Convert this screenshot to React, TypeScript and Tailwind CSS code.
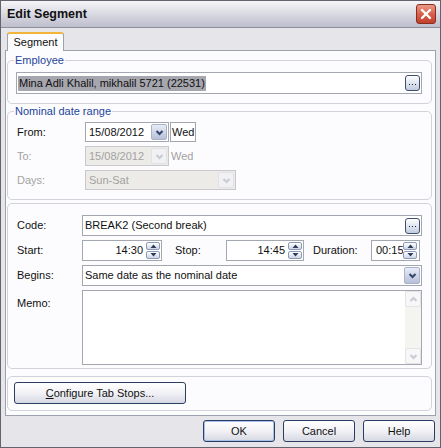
import React from "react";

function Chevron({ color, up }: { color: string; up?: boolean }) {
  return (
    <svg width="9" height="7" viewBox="0 0 9 7">
      <path
        d={up ? "M1.5 5 L4.5 2 L7.5 5" : "M1.5 2 L4.5 5 L7.5 2"}
        stroke={color}
        strokeWidth="2"
        fill="none"
      />
    </svg>
  );
}

function DropBtn({ disabled }: { disabled?: boolean }) {
  return (
    <div
      className={
        disabled
          ? "w-[16px] h-full border border-[#e2e2e6] rounded-[2px] bg-[#f1f1f3] flex items-center justify-center"
          : "w-[16px] h-full border border-[#a9b3cb] rounded-[2px] bg-gradient-to-b from-[#e8ecf7] to-[#b7c0d8] flex items-center justify-center"
      }
    >
      <Chevron color={disabled ? "#c6cad2" : "#34466a"} />
    </div>
  );
}

function Ellipsis() {
  return (
    <div className="w-[15px] h-[16px] border border-[#3e4f6f] rounded-[3px] bg-gradient-to-b from-white to-[#c2cce0] flex items-center justify-center gap-[2px] pt-[2px]">
      <div className="w-[1px] h-[1px] bg-[#1a2640]" />
      <div className="w-[1px] h-[1px] bg-[#1a2640]" />
      <div className="w-[1px] h-[1px] bg-[#1a2640]" />
    </div>
  );
}

function Spin() {
  return (
    <div className="flex flex-col justify-center gap-[1px] w-[14px] shrink-0">
      <div className="h-[8px] border border-[#8d9ab4] rounded-[2px] bg-gradient-to-b from-white to-[#cdd5e6] flex items-center justify-center">
        <svg width="7" height="4" viewBox="0 0 7 4">
          <path d="M0.5 4 L3.5 0.5 L6.5 4 Z" fill="#2c3b58" />
        </svg>
      </div>
      <div className="h-[8px] border border-[#8d9ab4] rounded-[2px] bg-gradient-to-b from-white to-[#cdd5e6] flex items-center justify-center">
        <svg width="7" height="4" viewBox="0 0 7 4">
          <path d="M0.5 0 L3.5 3.5 L6.5 0 Z" fill="#2c3b58" />
        </svg>
      </div>
    </div>
  );
}

function XpButton({ children, def }: { children: React.ReactNode; def?: boolean }) {
  return (
    <div
      className={
        def
          ? "w-[72px] h-[22px] border border-[#2a3d62] rounded-[3px] bg-gradient-to-b from-white via-[#f2f2f6] to-[#d6d8e2] shadow-[inset_0_0_0_1px_#a9c1ea] flex items-center justify-center"
          : "w-[72px] h-[22px] border border-[#2a3d62] rounded-[3px] bg-gradient-to-b from-white via-[#f2f2f6] to-[#d6d8e2] flex items-center justify-center"
      }
    >
      {children}
    </div>
  );
}

export default function App() {
  return (
    <div className="w-[441px] h-[448px] flex flex-col bg-[#e6e6ea] border border-[#62636c] text-[11px] leading-[13px] text-[#111] font-['Liberation_Sans',Arial,sans-serif] overflow-hidden">
      {/* Title bar */}
      <div className="h-[27px] shrink-0 flex items-center justify-between pl-[6px] pr-[4px] bg-gradient-to-b from-[#f6f6f9] via-[#d9d9e2] to-[#bebecd] border-b border-[#8e8e9c]">
        <span className="font-bold text-[12.5px] text-[#111]">Edit Segment</span>
        <div className="w-[20px] h-[20px] rounded-[3px] border border-[#8a2c20] bg-gradient-to-b from-[#e99a88] via-[#d8604a] to-[#c0402c] flex items-center justify-center">
          <svg width="12" height="12" viewBox="0 0 12 12">
            <path d="M2 2 L10 10 M10 2 L2 10" stroke="white" strokeWidth="2.4" strokeLinecap="round" />
          </svg>
        </div>
      </div>

      <div className="flex-1 flex flex-col px-[4px]">
        {/* Tab row */}
        <div className="h-[22px] shrink-0 flex items-end pl-[2px]">
          <div className="relative z-10 -mb-[1px] w-[57px] h-[19px] bg-[#fcfcfe] border-l border-r border-[#9ca3ae] border-t-2 border-t-[#f3b43a] rounded-t-[3px] flex items-center justify-center">
            Segment
          </div>
        </div>

        {/* Panel */}
        <div className="h-[366px] shrink-0 border border-[#9ca3ae] bg-[#fcfcfe] flex flex-col pl-[1px] pr-[3px]">
          {/* Employee */}
          <fieldset className="mt-[3px] border border-[#d2d2da] rounded-[5px] pl-[8px] pr-[9px] pb-[9px]">
            <legend className="-ml-[2px] px-[1px] text-[#23449a] leading-[13px]">Employee</legend>
            <div className="mt-[5px] h-[22px] border border-[#a3a7b0] bg-white flex items-center justify-between pl-[1px] pr-[1px]">
              <span className="bg-[#a6a6ae] px-[1px] leading-[15px]">Mina Adli Khalil, mikhalil 5721 (22531)</span>
              <Ellipsis />
            </div>
          </fieldset>

          {/* Nominal date range */}
          <fieldset className="mt-[1px] border border-[#d2d2da] rounded-[5px] pl-[9px] pr-[9px] pb-[9px]">
            <legend className="-ml-[3px] px-[1px] text-[#23449a] leading-[13px]">Nominal date range</legend>
            <div className="mt-[4px] h-[20px] flex items-center">
              <div className="w-[68px]">From:</div>
              <div className="w-[84px] h-full border border-[#a3a7b0] bg-white flex items-center justify-between pl-[3px] pr-[1px] py-[1px]">
                <span>15/08/2012</span>
                <DropBtn />
              </div>
              <div className="ml-[1px] w-[26px] h-full border border-[#a3a7b0] bg-white flex items-center pl-[1px]">Wed</div>
            </div>
            <div className="mt-[4px] h-[20px] flex items-center text-[#a2a2a2]">
              <div className="w-[68px]">To:</div>
              <div className="w-[84px] h-full border border-[#c9c9cc] bg-[#ecebe7] flex items-center justify-between pl-[3px] pr-[1px] py-[1px]">
                <span>15/08/2012</span>
                <DropBtn disabled />
              </div>
              <div className="ml-[2px]">Wed</div>
            </div>
            <div className="mt-[4px] h-[20px] flex items-center text-[#a2a2a2]">
              <div className="w-[68px]">Days:</div>
              <div className="w-[151px] h-full border border-[#c9c9cc] bg-[#ecebe7] flex items-center justify-between pl-[3px] pr-[1px] py-[1px]">
                <span>Sun-Sat</span>
                <DropBtn disabled />
              </div>
            </div>
          </fieldset>

          {/* Code group */}
          <div className="mt-[3px] border border-[#d2d2da] rounded-[5px] pl-[9px] pr-[9px] pt-[11px] pb-[3px]">
            <div className="h-[21px] flex items-center">
              <div className="w-[65px]">Code:</div>
              <div className="flex-1 h-full border border-[#a3a7b0] bg-white flex items-center justify-between pl-[2px] pr-[1px]">
                <span>BREAK2 (Second break)</span>
                <Ellipsis />
              </div>
            </div>
            <div className="mt-[4px] h-[21px] flex items-center">
              <div className="w-[65px]">Start:</div>
              <div className="w-[80px] h-full border border-[#a3a7b0] bg-white flex items-center justify-end pr-[1px]">
                <span className="mr-[3px]">14:30</span>
                <Spin />
              </div>
              <div className="w-[64px] pl-[13px]">Stop:</div>
              <div className="w-[78px] h-full border border-[#a3a7b0] bg-white flex items-center justify-end pr-[1px]">
                <span className="mr-[3px]">14:45</span>
                <Spin />
              </div>
              <div className="w-[67px] pl-[9px]">Duration:</div>
              <div className="w-[49px] h-full border border-[#a3a7b0] bg-white flex items-center pl-[4px] pr-[1px] overflow-hidden">
                <span className="w-[27px] overflow-hidden whitespace-nowrap">00:15</span>
                <Spin />
              </div>
            </div>
            <div className="mt-[4px] h-[21px] flex items-center">
              <div className="w-[65px]">Begins:</div>
              <div className="flex-1 h-full border border-[#a3a7b0] bg-white flex items-center justify-between pl-[2px] pr-[1px] py-[1px]">
                <span>Same date as the nominal date</span>
                <DropBtn />
              </div>
            </div>
            <div className="mt-[4px] h-[75px] flex items-start">
              <div className="w-[65px] pt-[7px]">Memo:</div>
              <div className="flex-1 h-full border border-[#a3a7b0] bg-white flex justify-end">
                <div className="w-[16px] h-full bg-[#f4f4f1] flex flex-col justify-between">
                  <div className="h-[16px] border border-[#e4e4e8] rounded-[2px] bg-[#f7f7f8] flex items-center justify-center">
                    <Chevron color="#c8ccd4" up />
                  </div>
                  <div className="h-[16px] border border-[#e4e4e8] rounded-[2px] bg-[#f7f7f8] flex items-center justify-center">
                    <Chevron color="#c8ccd4" />
                  </div>
                </div>
              </div>
            </div>
          </div>

          {/* Configure group */}
          <div className="mt-[7px] border border-[#d2d2da] rounded-[5px] pl-[6px] pt-[5px] pb-[6px]">
            <div className="w-[172px] h-[22px] border border-[#2a3d62] rounded-[3px] bg-gradient-to-b from-white via-[#f2f2f6] to-[#d6d8e2] flex items-center justify-center">
              <span>
                <span className="underline">C</span>onfigure Tab Stops...
              </span>
            </div>
          </div>
        </div>

        {/* Bottom buttons */}
        <div className="mt-[4px] flex justify-end gap-[8px] pr-[1px]">
          <XpButton def>OK</XpButton>
          <XpButton>Cancel</XpButton>
          <XpButton>Help</XpButton>
        </div>
      </div>
    </div>
  );
}
